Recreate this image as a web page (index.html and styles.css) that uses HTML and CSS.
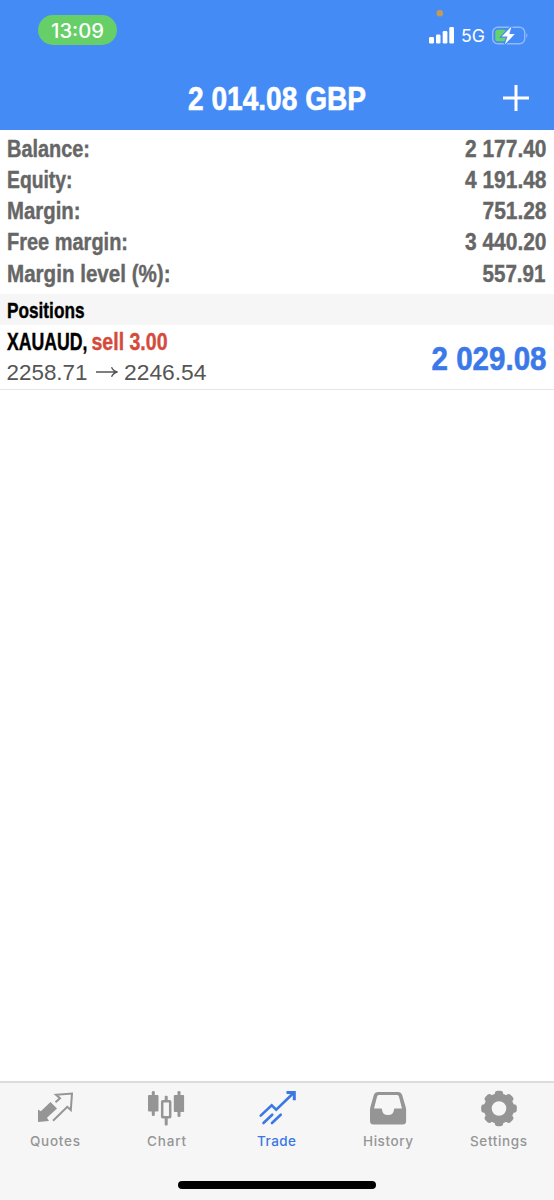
FILE: index.html
```html
<!DOCTYPE html>
<html lang="en">
<head>
<meta charset="utf-8">
<title>Trade</title>
<link rel="stylesheet" href="styles.css">
</head>
<body>
<main class="phone">
  <header class="header">
    <div class="status">
      <div class="clock"><svg class="label" width="53" height="30"><text class="time" x="0" y="22.5" textLength="53" lengthAdjust="spacingAndGlyphs">13:09</text></svg></div>
      <svg class="indicators" width="110" height="50" viewBox="0 0 110 50">
        <circle cx="19.8" cy="13.3" r="3.3" fill="#c39a59"/>
        <g fill="#fff"><rect x="9" y="37" width="5" height="6.5" rx="1.3"/><rect x="16" y="34.5" width="4.5" height="9" rx="1.3"/><rect x="22.7" y="31" width="4.7" height="12.5" rx="1.3"/><rect x="29.3" y="27" width="4.7" height="16.5" rx="1.3"/></g>
        <text class="network" x="41" y="42.2" textLength="24" lengthAdjust="spacingAndGlyphs">5G</text>
        <rect x="72.7" y="27.2" width="32" height="16.5" rx="5" fill="none" stroke="#90bafa" stroke-width="1.4"/>
        <path d="M106.3 33q2.4 2.5 0 5z" fill="#90bafa"/>
        <rect x="75.3" y="29.7" width="11" height="11.5" rx="2.5" fill="#64d36c"/>
        <path d="M91.5 26.5 81.8 36.5h5.7l-2.7 8 10-10.5h-5.5z" fill="#fff" stroke="#458bf6" stroke-width="2.4" paint-order="stroke"/>
      </svg>
    </div>
    <div class="titlebar">
      <svg class="label title" width="178" height="40"><text x="0" y="31.5" textLength="178" lengthAdjust="spacingAndGlyphs">2 014.08 GBP</text></svg>
      <svg class="plus" width="28" height="28" viewBox="0 0 28 28"><path d="M14 1v26M1 14h26" stroke="#fff" stroke-width="3"/></svg>
    </div>
  </header>
  <section class="account">
    <div class="row"><svg class="label" width="83" height="31"><text x="0" y="23.5" textLength="83" lengthAdjust="spacingAndGlyphs">Balance:</text></svg><svg class="label" width="82" height="31"><text x="0" y="23.5" textLength="81.5" lengthAdjust="spacingAndGlyphs">2 177.40</text></svg></div>
    <div class="row"><svg class="label" width="65" height="31"><text x="0" y="23.5" textLength="65.5" lengthAdjust="spacingAndGlyphs">Equity:</text></svg><svg class="label" width="82" height="31"><text x="0" y="23.5" textLength="81.5" lengthAdjust="spacingAndGlyphs">4 191.48</text></svg></div>
    <div class="row"><svg class="label" width="73" height="31"><text x="0" y="23.5" textLength="73.5" lengthAdjust="spacingAndGlyphs">Margin:</text></svg><svg class="label" width="65" height="31"><text x="0.5" y="23.5" textLength="64" lengthAdjust="spacingAndGlyphs">751.28</text></svg></div>
    <div class="row"><svg class="label" width="121" height="31"><text x="0" y="23.5" textLength="121" lengthAdjust="spacingAndGlyphs">Free margin:</text></svg><svg class="label" width="82" height="31"><text x="0" y="23.5" textLength="81.5" lengthAdjust="spacingAndGlyphs">3 440.20</text></svg></div>
    <div class="row"><svg class="label" width="163" height="31"><text x="0" y="23.5" textLength="163.5" lengthAdjust="spacingAndGlyphs">Margin level (%):</text></svg><svg class="label" width="65" height="31"><text x="0.5" y="23.5" textLength="63" lengthAdjust="spacingAndGlyphs">557.91</text></svg></div>
  </section>
  <h2 class="section"><svg class="label" width="78" height="31"><text x="0" y="23.5" textLength="77.5" lengthAdjust="spacingAndGlyphs">Positions</text></svg></h2>
  <article class="position">
    <div class="details">
      <svg class="label symbol" width="161" height="32"><text x="0" y="24.5" textLength="80.5" lengthAdjust="spacingAndGlyphs">XAUAUD,</text><text class="sell" x="84.5" y="24.5" textLength="76" lengthAdjust="spacingAndGlyphs">sell 3.00</text></svg>
      <svg class="label prices" width="201" height="32"><text x="-0.500" y="22.500" textLength="81" lengthAdjust="spacingAndGlyphs">2258.71</text><path d="M89 15h21M104.500 10.200q2 4 6 4.800-4 .8-6 4.800" fill="none" stroke="#555" stroke-width="1.400"/><text x="117" y="22.500" textLength="82.500" lengthAdjust="spacingAndGlyphs">2246.54</text></svg>
    </div>
    <svg class="label profit" width="116" height="46"><text x="0.500" y="35.800" textLength="115" lengthAdjust="spacingAndGlyphs">2 029.08</text></svg>
  </article>
  <nav class="tabs">
    <a class="tab"><svg class="icon" width="40" height="40" viewBox="0 0 40 40"><path d="M3 20.500 5.800 22.300 15.500 13l6.500 6.500-10 9.300 2 3.200-11 1z" fill="#959595"/><path d="m18 31.800 14.300-14 3.500 3.200 1.200-16.500-16 1.300 4 3.500-4.500 4" fill="none" stroke="#959595" stroke-width="2"/></svg><svg class="label" width="50" height="20"><text x="0" y="15" textLength="50">Quotes</text></svg></a>
    <a class="tab"><svg class="icon" width="40" height="40" viewBox="0 0 40 40"><g fill="#959595"><rect x="2" y="6" width="10.500" height="16.500" rx="1"/><rect x="5.800" y="2" width="3" height="25" rx="1.300"/><rect x="27.800" y="6" width="10.300" height="17" rx="1"/><rect x="31.500" y="2" width="3" height="26" rx="1.300"/><rect x="18.700" y="6.700" width="3" height="6" rx="1"/><rect x="18.700" y="28" width="3" height="8.500" rx="1"/></g><rect x="16.200" y="12.300" width="8" height="16" rx=".5" fill="none" stroke="#959595" stroke-width="2.500"/></svg><svg class="label" width="39" height="20"><text x="0" y="15" textLength="39">Chart</text></svg></a>
    <a class="tab active"><svg class="icon" width="40" height="40" viewBox="0 0 40 40"><g fill="none" stroke="#3a78e5" stroke-width="2.600" stroke-linecap="round"><path d="m3.700 26.600 11-10.300 4.500 4.300L36.500 4"/><path d="M29.500 3.500h7.800v7.800" stroke-width="3" stroke-linecap="butt"/><path d="m6.500 34 8.700-8.300M15 34l8.700-8.300"/></g></svg><svg class="label" width="39" height="20"><text x="0" y="15" textLength="39">Trade</text></svg></a>
    <a class="tab"><svg class="icon" width="40" height="40" viewBox="0 0 40 40"><path fill="#959595" fill-rule="evenodd" d="M10 3h20q3 0 4.200 3l3.600 12.500q.3 1 .3 2V32q0 3.500-3.500 3.500H5.500Q2 35.500 2 32V20.500q0-1 .3-2L5.800 6Q7 3 10 3zM10.700 6q-1.200 0-1.700 1.700L6 19.500h7.200q.8 0 .8 1 .4 5.500 6 5.500t6-5.500q0-1 .8-1H34L31 7.700Q30.500 6 29.300 6z"/></svg><svg class="label" width="50" height="20"><text x="0" y="15" textLength="50">History</text></svg></a>
    <a class="tab"><svg class="icon" width="40" height="40" viewBox="0 0 40 40"><circle cx="20" cy="19.500" r="11.200" fill="none" stroke="#959595" stroke-width="7.800"/><g fill="#959595"><g id="cogs"><rect x="15.800" y="1.700" width="8.400" height="7" rx="3"/><rect x="15.800" y="30.300" width="8.400" height="7" rx="3"/></g><use href="#cogs" transform="rotate(45 20 19.500)"/><use href="#cogs" transform="rotate(90 20 19.500)"/><use href="#cogs" transform="rotate(135 20 19.500)"/></g></svg><svg class="label" width="57" height="20"><text x="0" y="15" textLength="57">Settings</text></svg></a>
  </nav>
  <footer class="home"><div class="home-bar"></div></footer>
</main>
</body>
</html>
```

FILE: styles.css
```css
* { box-sizing: border-box; }
body { margin: 0; background: #fff; font-family: "Liberation Sans", Arial, sans-serif; }
svg { display: block; flex: none; }
.phone { width: 554px; height: 1200px; display: flex; flex-direction: column; }
.label { overflow: visible; fill: currentColor; }
.header { height: 129.500px; flex: none; background: #458bf6; color: #fff; }
.status { height: 70px; display: flex; justify-content: space-between; padding: 0 26px 0 38px; }
.status .indicators { margin-right: -2px; }
.clock { width: 79px; height: 30px; margin-top: 15px; border-radius: 15px; background: #66cf68; display: flex; justify-content: center; }
.time { font: 500 19.500px Inter, sans-serif; }
.indicators { margin-left: auto; }
.network { font: 400 17.500px Inter, sans-serif; fill: #fff; }
.titlebar { display: grid; grid-template-columns: 1fr 178px 1fr; align-items: center; padding: 0 24px 0 23px; height: 56px; font-size: 33px; font-weight: 700; }
.title { grid-column: 2; stroke: currentColor; stroke-width: .6px; }
.plus { justify-self: end; }
.account { height: 164.500px; flex: none; padding: 3px 7px 5px; color: #666; font-size: 23.500px; font-weight: 700; }
.row { height: 31.300px; display: flex; justify-content: space-between; }
.row .label, .section .label { stroke: currentColor; stroke-width: .4px; }
.section { height: 31px; flex: none; margin: 0; padding-left: 7px; background: #f6f6f6; color: #000; font-size: 22px; font-weight: 700; }
.position { height: 65px; flex: none; padding: 0 7px; display: flex; align-items: center; justify-content: space-between; border-bottom: 1.500px solid #e5e5e5; }
.symbol { color: #000; font-size: 23px; font-weight: 700; stroke: #000; stroke-width: .4px; }
.sell { fill: #d44b3c; stroke: #d44b3c; }
.prices { color: #555; font-size: 22.500px; }
.profit { color: #3b79e9; font-size: 33px; font-weight: 700; stroke: currentColor; stroke-width: .6px; }
.tabs { margin-top: auto; height: 83px; flex: none; display: grid; grid-template-columns: repeat(5, 1fr); background: #f6f6f6; border-top: 2px solid #dcdcdc; color: #959595; font: 500 13.500px Inter, sans-serif; }
.tab { display: flex; flex-direction: column; align-items: center; padding-top: 6px; }
.tab .label { margin-top: 2px; }
.active { color: #3a78e5; }
.home { height: 36px; flex: none; background: #f6f6f6; display: flex; justify-content: center; padding-top: 17px; }
.home-bar { width: 198px; height: 8px; border-radius: 4px; background: #000; }
```
